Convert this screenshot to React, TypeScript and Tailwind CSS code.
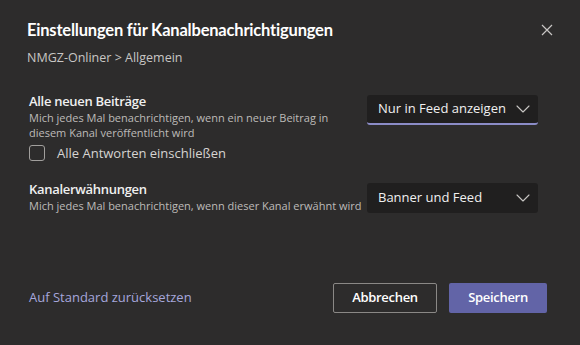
import * as React from "react";

function Chevron() {
  return (
    <svg width="14" height="8" viewBox="0 0 14 8" fill="none" className="shrink-0">
      <path d="M1 1l6 6 6-6" stroke="#c8c6c4" strokeWidth="1.1" strokeLinecap="round" strokeLinejoin="round" />
    </svg>
  );
}

function Select({ label, active }: { label: string; active?: boolean }) {
  return (
    <div
      className={
        "w-[171px] h-[30px] bg-[#201f1f] rounded-[3px] flex items-center justify-between pl-[11px] pr-[8px] text-[13px] text-[#f0f0f0] " +
        (active ? "border-b-2 border-[#8b8cc7]" : "")
      }
    >
      <span>{label}</span>
      <Chevron />
    </div>
  );
}

export default function App() {
  return (
    <div
      className="w-[580px] h-[345px] bg-[#2d2c2c] flex flex-col text-white"
      style={{ fontFamily: '"Open Sans", "Liberation Sans", sans-serif' }}
    >
      <div className="flex items-start justify-between pl-[27px] pr-[27px] pt-[18px]">
        <div className="flex flex-col">
          <h1 className="text-[16.5px] font-bold leading-[24px] text-white font-['Lato',sans-serif] tracking-[-0.2px]">
            Einstellungen für Kanalbenachrichtigungen
          </h1>
          <p className="mt-[7px] text-[12.5px] leading-[18px] text-[#c8c6c4]">NMGZ-Onliner &gt; Allgemein</p>
        </div>
        <svg width="12" height="12" viewBox="0 0 12 12" className="mt-[6px]">
          <path d="M1 1l10 10M11 1L1 11" stroke="#c8c6c4" strokeWidth="1.2" />
        </svg>
      </div>

      <div className="flex justify-between pl-[29px] pr-[42px] mt-[25px]">
        <div className="flex flex-col">
          <span className="text-[13px] font-semibold leading-[18px] text-[#f0f0f0] tracking-[-0.3px]">Alle neuen Beiträge</span>
          <span className="text-[11px] leading-[15px] text-[#bdbbb9] w-[300px]">
            Mich jedes Mal benachrichtigen, wenn ein neuer Beitrag in diesem Kanal veröffentlicht wird
          </span>
          <label className="flex items-center gap-[12px] mt-[4px]">
            <span className="w-[16px] h-[16px] rounded-[3px] border border-[#a19f9d]" />
            <span className="text-[13px] leading-[18px] text-[#d6d4d2]">Alle Antworten einschließen</span>
          </label>
        </div>
        <div className="mt-[3px]">
          <Select label="Nur in Feed anzeigen" active />
        </div>
      </div>

      <div className="flex justify-between items-center pl-[29px] pr-[42px] mt-[17px]">
        <div className="flex flex-col">
          <span className="text-[13px] font-semibold leading-[18px] text-[#f0f0f0] tracking-[-0.3px]">Kanalerwähnungen</span>
          <span className="text-[11px] leading-[15px] text-[#bdbbb9]">
            Mich jedes Mal benachrichtigen, wenn dieser Kanal erwähnt wird
          </span>
        </div>
        <div className="mt-[4px]">
          <Select label="Banner und Feed" />
        </div>
      </div>

      <div className="flex items-center justify-between pl-[29px] pr-[33px] mt-auto mb-[32px]">
        <span className="text-[13px] text-[#a6a7dc]">Auf Standard zurücksetzen</span>
        <div className="flex gap-[12px]">
          <button className="w-[104px] h-[30px] border border-[#8a8886] rounded-[2px] text-[13px] font-semibold text-white bg-transparent tracking-[-0.3px]">
            Abbrechen
          </button>
          <button className="w-[98px] h-[30px] bg-[#6264a7] rounded-[2px] text-[13px] font-semibold text-white tracking-[-0.3px]">
            Speichern
          </button>
        </div>
      </div>
    </div>
  );
}
